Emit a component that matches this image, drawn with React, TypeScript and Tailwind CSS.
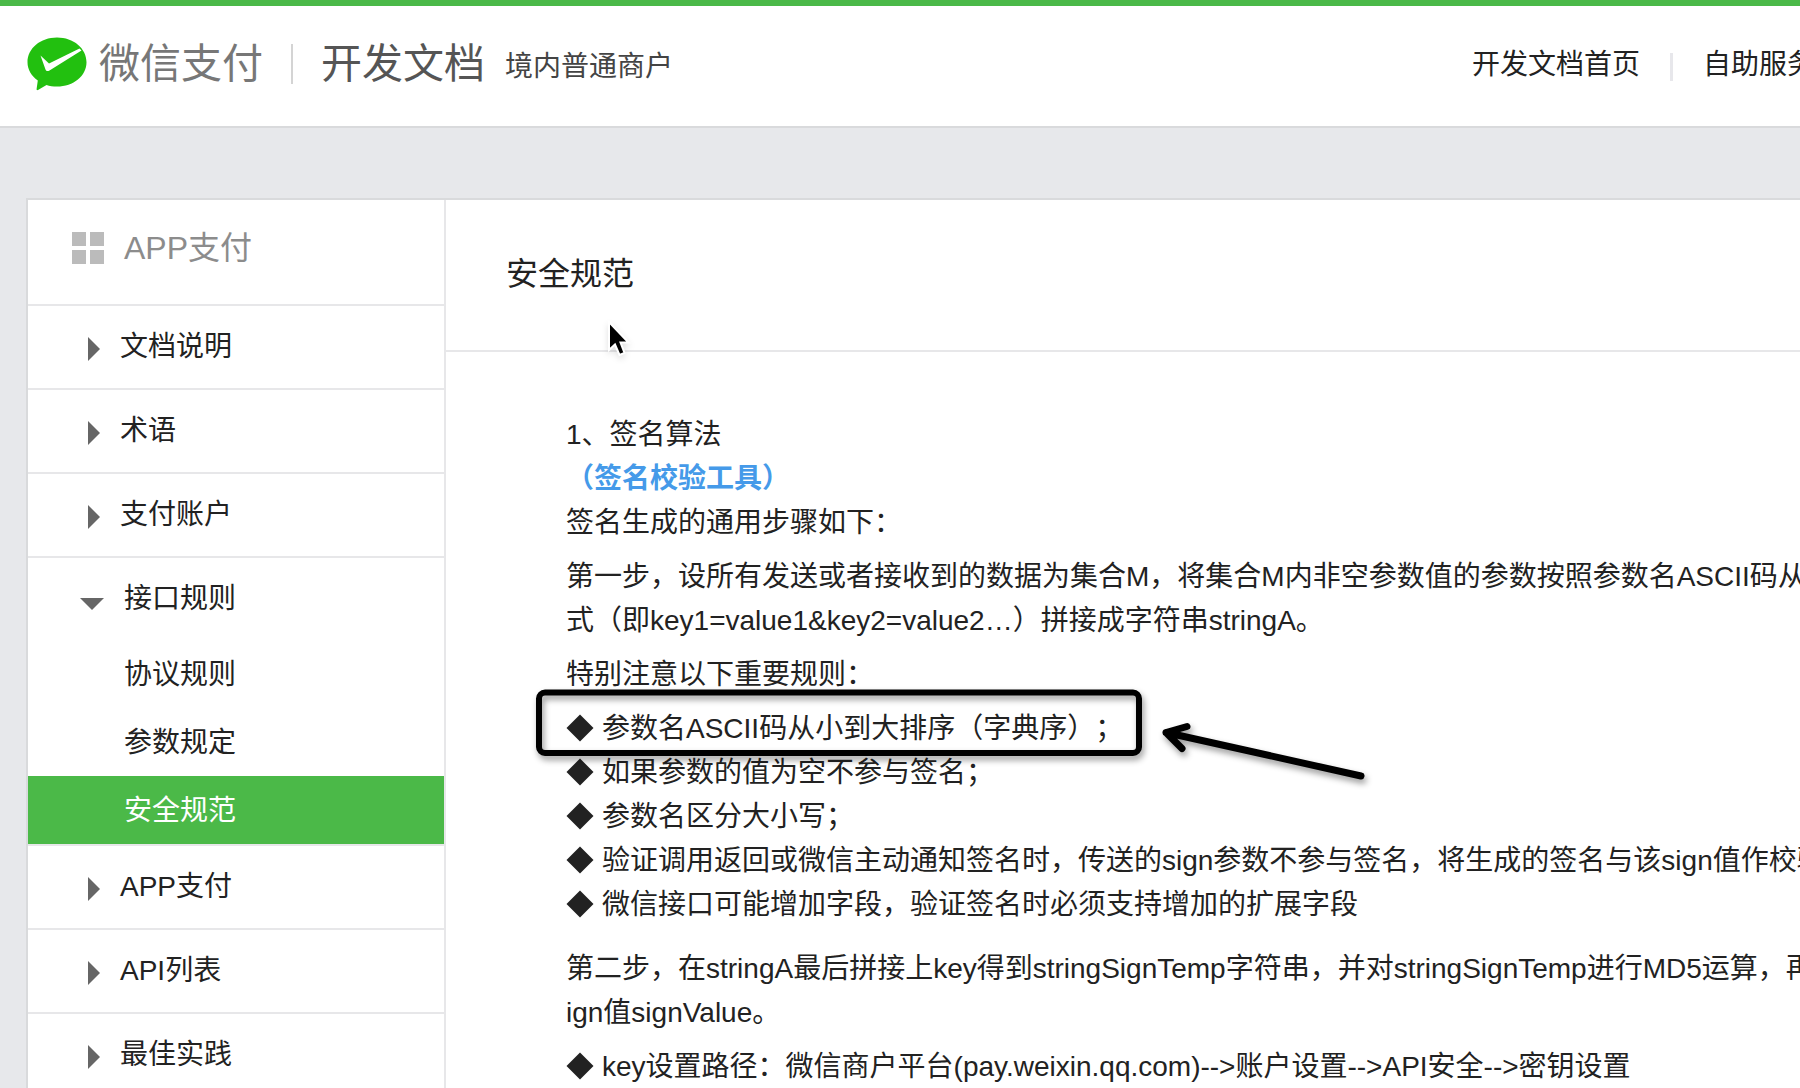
import React from 'react';

const menuBefore = ['文档说明', '术语', '支付账户'];
const menuAfter = ['APP支付', 'API列表', '最佳实践'];
const subMenu = ['协议规则', '参数规定', '安全规范'];

const rules = [
  '参数名ASCII码从小到大排序（字典序）；',
  '如果参数的值为空不参与签名；',
  '参数名区分大小写；',
  '验证调用返回或微信主动通知签名时，传送的sign参数不参与签名，将生成的签名与该sign值作校验',
  '微信接口可能增加字段，验证签名时必须支持增加的扩展字段',
];

function Logo() {
  return (
    <svg viewBox="0 0 60 54" className="h-[54px] w-[60px] shrink-0" aria-hidden="true">
      <path
        d="M30 0.5C46.5 0.5 59.5 11.5 59.5 25.2S46.5 49.5 30 49.5C26 49.5 22.5 48.9 19.5 47.9L11 53C10 53.4 9.4 52.9 9.6 52L10.8 43.5C4.5 39 0.5 32.5 0.5 25.2C0.5 11.5 13.5 0.5 30 0.5Z"
        fill="#22c00f"
      />
      <path d="M13.5 18.5L22 26.5L52.5 11.5L54.5 13.5L22.5 33.5C20.5 34.6 19.3 34.2 18.5 32.5Z" fill="#fff" />
    </svg>
  );
}

function Diamond() {
  return (
    <svg viewBox="0 0 28 28" className="mb-0.5 size-7 shrink-0" aria-hidden="true">
      <path d="M14 0.5L27.5 14L14 27.5L0.5 14Z" fill="#222" />
    </svg>
  );
}

function MenuItem({ label }: { label: string }) {
  return (
    <li className="border-b-2 border-[#e7e7e9]">
      <a href="#" className="flex h-[82px] items-center gap-5 pl-[60px]">
        <svg viewBox="0 0 12 24" className="mt-1 h-6 w-3" aria-hidden="true">
          <path d="M0 0L12 12L0 24Z" fill="#666" />
        </svg>
        {label}
      </a>
    </li>
  );
}

export default function App() {
  return (
    <div className="min-h-screen overflow-hidden bg-[#e7e8eb] font-['Liberation_Sans','Noto_Sans_CJK_SC',sans-serif] text-[28px] leading-[44px] text-[#222] [text-spacing-trim:space-all]">
      <header className="flex h-32 items-center border-t-6 border-b-2 border-t-[#4bb948] border-b-[#d9dadc] bg-white px-[27px] pb-1">
        <a href="#" className="flex items-center whitespace-nowrap">
          <Logo />
          <span className="ml-3 text-[41px] text-[#777]">微信支付</span>
          <span className="mx-7 h-10 w-0.5 bg-[#d4d4d4]" />
          <span className="text-[41px] text-[#555]">开发文档</span>
          <span className="ml-5 pt-1.5 text-[#444]">境内普通商户</span>
        </a>
        <nav className="-mr-[42px] ml-auto flex items-center pt-0.5 whitespace-nowrap">
          <a href="#">开发文档首页</a>
          <span className="mx-[30px] mt-1 h-7 w-[3px] bg-[#e7e7eb]" />
          <a href="#">自助服务</a>
        </nav>
      </header>

      <div className="mt-[70px] ml-[26px] flex min-h-[890px] border-t-2 border-l-2 border-[#d9dadc] bg-white">
        <aside className="box-content w-[416px] shrink-0 border-r-2 border-[#e7e7e9]">
          <h2 className="flex h-[106px] items-center gap-5 border-b-2 border-[#e7e7e9] pb-2 pl-11 text-[32px] text-[#8c8c8c]">
            <svg viewBox="0 0 32 32" className="size-8" fill="#bbb" aria-hidden="true">
              <path d="M0 0H14V14H0ZM18 0H32V14H18ZM0 18H14V32H0ZM18 18H32V32H18Z" />
            </svg>
            APP支付
          </h2>
          <ul>
            {menuBefore.map((label) => (
              <MenuItem key={label} label={label} />
            ))}
            <li className="border-b-2 border-[#e7e7e9]">
              <a href="#" className="flex h-[82px] items-center gap-5 pl-[52px]">
                <svg viewBox="0 0 24 12" className="mt-2.5 h-3 w-6" aria-hidden="true">
                  <path d="M0 0H24L12 12Z" fill="#666" />
                </svg>
                接口规则
              </a>
              <ul>
                {subMenu.map((label) => (
                  <li key={label}>
                    <a
                      href="#"
                      className={`flex h-[68px] items-center pt-0.5 pl-24 ${label === '安全规范' ? 'bg-[#4bb948] text-white' : ''}`}
                    >
                      {label}
                    </a>
                  </li>
                ))}
              </ul>
            </li>
            {menuAfter.map((label) => (
              <MenuItem key={label} label={label} />
            ))}
          </ul>
        </aside>

        <main className="min-w-0 flex-1 whitespace-nowrap">
          <div className="flex h-[152px] items-center border-b-2 border-[#e7e7e9] pb-0.5 pl-15">
            <h1 className="relative text-[32px]">
              安全规范
              {/* mouse pointer */}
              <svg viewBox="0 0 24 36" className="absolute top-[69px] left-[101px] h-9 w-6 drop-shadow-md" aria-hidden="true">
                <path
                  d="M2 1V29L8 23.5L12.5 34L17.5 32L13.5 21.5H21.5Z"
                  fill="#000"
                  stroke="#fff"
                  strokeWidth="2"
                />
              </svg>
            </h1>
          </div>

          <div className="pt-[61px] pl-30">
            <p>1、签名算法</p>
            <p>
              <a href="#" className="font-bold text-[#459ae9]">（签名校验工具）</a>
            </p>
            <p>签名生成的通用步骤如下：</p>
            <p className="mt-2.5">
              第一步，设所有发送或者接收到的数据为集合M，将集合M内非空参数值的参数按照参数名ASCII码从
              <br />
              式（即key1=value1&amp;key2=value2…）拼接成字符串stringA。
            </p>
            <p className="mt-2.5">特别注意以下重要规则：</p>
            <ul className="relative mt-2.5">
              {rules.map((rule) => (
                <li key={rule} className="flex items-center gap-2">
                  <Diamond />
                  {rule}
                </li>
              ))}
              {/* hand-drawn frame and arrow round the first rule */}
              <li aria-hidden="true" className="absolute -top-[18px] -left-[31px]">
                <svg
                  viewBox="0 0 840 106"
                  className="h-[106px] w-[840px] drop-shadow-[2px_4px_3px_rgba(0,0,0,0.4)]"
                  fill="none"
                  stroke="#000"
                  strokeWidth="6"
                  strokeLinecap="round"
                  strokeLinejoin="round"
                >
                  <rect x="4" y="3.5" width="600" height="60.5" rx="6" />
                  <path d="M652 37.5L631 43.5L647 59.5M631 43.5L826 87" strokeWidth="7" />
                </svg>
              </li>
            </ul>
            <p className="mt-5">
              第二步，在stringA最后拼接上key得到stringSignTemp字符串，并对stringSignTemp进行MD5运算，再
              <br />
              ign值signValue。
            </p>
            <p className="mt-2.5 flex items-center gap-2">
              <Diamond />
              key设置路径：微信商户平台(pay.weixin.qq.com)--&gt;账户设置--&gt;API安全--&gt;密钥设置
            </p>
          </div>
        </main>
      </div>
    </div>
  );
}
